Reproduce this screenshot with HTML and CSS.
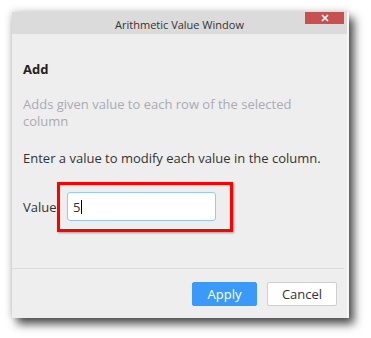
FILE: index.html
```html
<!DOCTYPE html>
<html lang="en">
<head>
  <meta charset="UTF-8">
  <title>Arithmetic Value Window</title>
  <link rel="stylesheet" href="styles.css">
</head>
<body>
  <div class="window">
    <div class="titlebar">
      <span class="title">Arithmetic Value Window</span>
      <button class="close" aria-label="Close">
        <svg width="8" height="8" viewBox="0 0 8 8"><path d="M1 1L7 7M7 1L1 7" stroke="#fff" stroke-width="1.6"/></svg>
      </button>
    </div>

    <div class="content">
      <h1>Add</h1>
      <p class="desc">Adds given value to each row of the selected column</p>
      <p class="hint">Enter a value to modify each value in the column.</p>

      <div class="field">
        <label for="value">Value</label>
        <div class="input-wrap">
          <input id="value" type="text" value="5">
          <span class="caret"></span>
        </div>
        <!-- annotation box drawn over the input -->
        <div class="highlight"></div>
      </div>
    </div>

    <div class="footer">
      <button class="btn btn-primary">Apply</button>
      <button class="btn">Cancel</button>
    </div>
  </div>
</body>
</html>
```

FILE: styles.css
```css
html {
  background: #fff;
}

body {
  margin: 0;
  padding: 12px 22px 20px 12px;
  width: 371px;
  min-height: 338px;
  box-sizing: border-box;
  background: #fff;
  font-family: "Open Sans", "Noto Sans", sans-serif;
  color: #333;
}

.window {
  width: 337px;
  height: 306px;
  background: #eeeeee;
  display: flex;
  flex-direction: column;
  box-shadow: 5px 6px 9px rgba(0, 0, 0, 0.7), -1px -1px 7px rgba(0, 0, 0, 0.15);
  border-right: 2px solid #f6f6f6;
  box-sizing: border-box;
}

.titlebar {
  height: 22px;
  background: #dcdbdc;
  display: flex;
  align-items: center;
  justify-content: center;
  position: relative;
  flex-shrink: 0;
}

.title {
  font-size: 11px;
  color: #333;
  margin-top: 2px;
}

.close {
  position: absolute;
  top: 0;
  right: 3px;
  width: 39px;
  height: 12px;
  border: none;
  padding: 0;
  background: #c75050;
  display: flex;
  align-items: center;
  justify-content: center;
}

.content {
  flex: 1;
  padding: 26px 11px 0 11px;
}

h1 {
  margin: 0;
  font-size: 13px;
  font-weight: 700;
  color: #222;
  line-height: 18px;
}

.desc {
  margin: 18px 0 0;
  font-size: 13px;
  line-height: 17px;
  color: #a8acb0;
  padding-right: 30px;
}

.hint {
  margin: 20px 0 0;
  font-size: 13px;
  line-height: 17px;
  color: #333;
}

.field {
  position: relative;
  display: flex;
  align-items: center;
  margin-top: 25px;
}

.field label {
  font-size: 13px;
  width: 44px;
}

.input-wrap {
  position: relative;
}

.field input {
  display: block;
  width: 149px;
  height: 29px;
  box-sizing: border-box;
  border: 1px solid #99c8f3;
  border-radius: 3px;
  background: #fff;
  font-family: inherit;
  font-size: 13px;
  color: #333;
  padding: 0 5px;
  outline: none;
}

.caret {
  position: absolute;
  left: 14px;
  top: 8px;
  width: 1px;
  height: 14px;
  background: #000;
}

.highlight {
  position: absolute;
  left: 34px;
  top: -10px;
  width: 176px;
  height: 50px;
  box-sizing: border-box;
  border: 3px solid #f00;
  box-shadow: 1px 1px 2px rgba(0, 0, 0, 0.35);
}

.footer {
  height: 49px;
  border-top: 1px solid #dcdcdc;
  margin-right: 3px;
  display: flex;
  justify-content: flex-end;
  align-items: center;
  gap: 10px;
  padding: 0 7px 0 0;
  flex-shrink: 0;
}

.btn {
  width: 70px;
  height: 24px;
  font-family: inherit;
  font-size: 13px;
  color: #333;
  background: #fff;
  border: 1px solid #cfcfcf;
  border-radius: 2px;
  padding: 0;
}

.btn-primary {
  width: 65px;
  background: #3b99f8;
  border-color: #3b99f8;
  color: #fff;
}
```
